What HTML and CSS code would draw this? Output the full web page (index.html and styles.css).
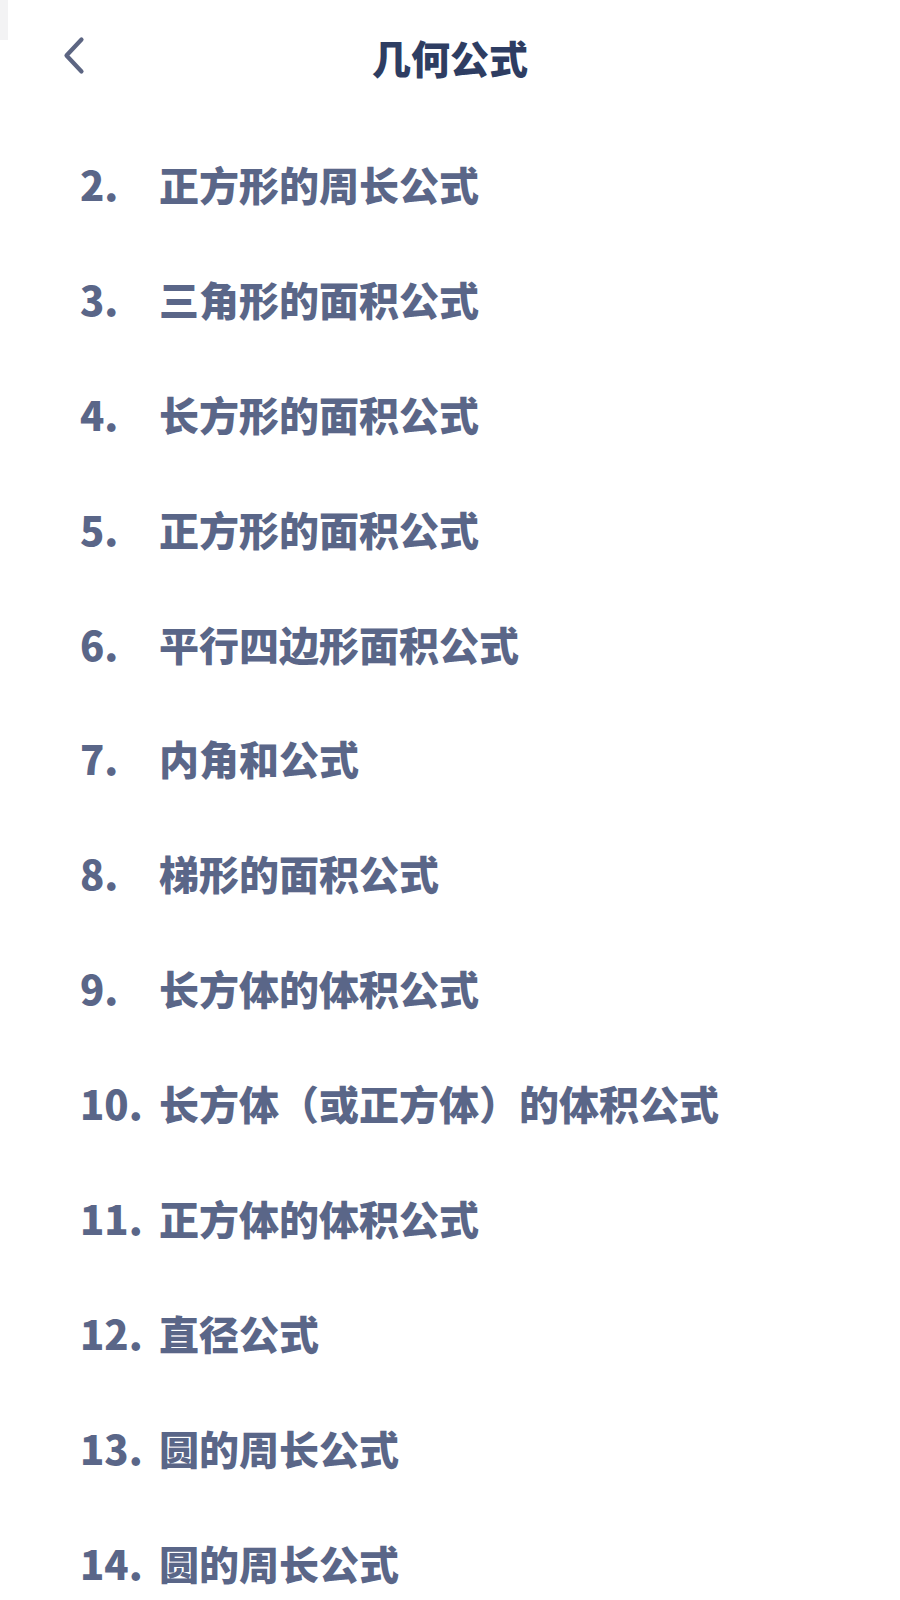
FILE: index.html
```html
<!DOCTYPE html>
<html lang="zh">
<head>
<meta charset="utf-8">
<link rel="stylesheet" href="styles.css">
</head>
<body>
<div class="page">
  <div class="corner"></div>
  <header class="header">
    <div class="back">
      <svg width="24" height="40" viewBox="0 0 24 40"><path d="M19.5 3.5 L4.5 19.5 L19.5 35.5" fill="none" stroke="#5c6582" stroke-width="4.2" stroke-linecap="round" stroke-linejoin="round"/></svg>
    </div>
    <h1 class="title">几何公式</h1>
    <div class="spacer"></div>
  </header>
  <ul class="list">
    <li class="item"><span class="num">2.</span><span class="text">正方形的周长公式</span></li>
    <li class="item"><span class="num">3.</span><span class="text">三角形的面积公式</span></li>
    <li class="item"><span class="num">4.</span><span class="text">长方形的面积公式</span></li>
    <li class="item"><span class="num">5.</span><span class="text">正方形的面积公式</span></li>
    <li class="item"><span class="num">6.</span><span class="text">平行四边形面积公式</span></li>
    <li class="item"><span class="num">7.</span><span class="text">内角和公式</span></li>
    <li class="item"><span class="num">8.</span><span class="text">梯形的面积公式</span></li>
    <li class="item"><span class="num">9.</span><span class="text">长方体的体积公式</span></li>
    <li class="item"><span class="num">10.</span><span class="text">长方体（或正方体）的体积公式</span></li>
    <li class="item"><span class="num">11.</span><span class="text">正方体的体积公式</span></li>
    <li class="item"><span class="num">12.</span><span class="text">直径公式</span></li>
    <li class="item"><span class="num">13.</span><span class="text">圆的周长公式</span></li>
    <li class="item"><span class="num">14.</span><span class="text">圆的周长公式</span></li>
  </ul>
</div>
</body>
</html>
```
FILE: styles.css
```css
html, body {
  margin: 0;
  padding: 0;
  background: #ffffff;
}
body {
  font-family: "Noto Sans CJK SC", "Noto Sans", sans-serif;
  width: 900px;
  height: 1600px;
  overflow: hidden;
}
.page {
  position: relative;
}
.corner {
  position: absolute;
  left: 0;
  top: 0;
  width: 8px;
  height: 40px;
  background: #f3f3f4;
}
.header {
  height: 126.5px;
  display: grid;
  grid-template-columns: 1fr auto 1fr;
  align-items: start;
  box-sizing: border-box;
  padding-top: 36px;
}
.back {
  padding-left: 62px;
}
.back svg {
  display: block;
}
.title {
  margin: 0;
  text-align: center;
  font-size: 39px;
  line-height: 42px;
  font-weight: 900;
  color: #2e3d62;
}
.list {
  list-style: none;
  margin: 0;
  padding: 0 0 0 80px;
}
.item {
  height: 114.9px;
  display: flex;
  align-items: center;
  color: #5a6688;
  font-weight: 900;
  font-size: 40px;
  line-height: 1.2;
}
.num {
  width: 79px;
  flex: none;
}
.text {
  white-space: nowrap;
}
```
